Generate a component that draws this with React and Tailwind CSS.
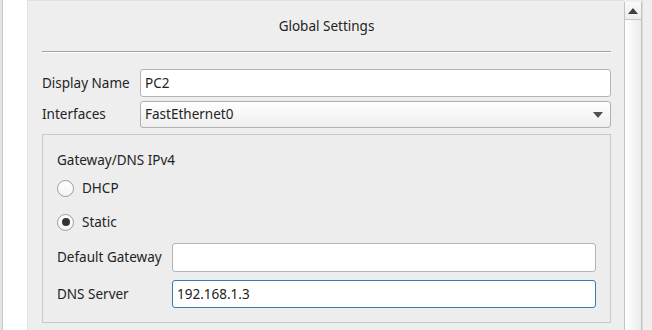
import React from "react";

const font = { fontFamily: '"Noto Sans", "Open Sans", sans-serif' };

const Radio = ({ checked, label }) => (
  <div className="flex items-center h-[20px]">
    <span className="w-[17px] h-[17px] rounded-full border border-[#9c9c9c] bg-gradient-to-b from-white to-[#f4f4f4] flex items-center justify-center">
      {checked && <span className="w-[8px] h-[8px] rounded-full bg-[#333333]" />}
    </span>
    <span className="ml-[8px]">{label}</span>
  </div>
);

const App = () => {
  return (
    <div
      className="flex w-[652px] h-[330px] bg-white text-[13.5px] text-[#232323] overflow-hidden"
      style={font}
    >
      {/* left edge */}
      <div className="w-[3px] bg-[#e4e4e4] border-r border-[#c6c6c6]" />
      <div className="w-[24px] bg-white" />

      {/* main panel */}
      <div className="w-[597px] bg-[#eeeeee] border-l border-t border-[#e2e2e2] pl-[14px] pr-[13px] flex flex-col">
        <div className="h-[50px] flex items-center justify-center">
          Global Settings
        </div>
        <div className="h-[2px] border-t border-[#a4a4a4] border-b border-b-[#fafafa]" />

        <div className="mt-[16px] flex items-center h-[28px]">
          <span className="w-[98px] shrink-0">Display Name</span>
          <div className="flex-1 h-[28px] bg-white border border-[#b4b4b4] rounded-[3px] flex items-center px-[4px]">
            PC2
          </div>
        </div>

        <div className="mt-[4px] flex items-center h-[27px]">
          <span className="w-[98px] shrink-0">Interfaces</span>
          <div className="flex-1 h-[27px] bg-gradient-to-b from-white to-[#eeeeee] border border-[#b0b0b0] rounded-[3px] flex items-center justify-between pl-[4px] pr-[7px]">
            <span>FastEthernet0</span>
            <svg width="10" height="6" viewBox="0 0 10 6">
              <path d="M0 0 L10 0 L5 6 Z" fill="#505050" />
            </svg>
          </div>
        </div>

        {/* group box */}
        <div className="mt-[6px] h-[189px] border border-[#c9c9c9] bg-[#ededed] pl-[14px] pr-[14px] flex flex-col">
          <div className="mt-[15px] h-[20px] flex items-center">Gateway/DNS IPv4</div>
          <div className="mt-[8px]">
            <Radio label="DHCP" />
          </div>
          <div className="mt-[14px]">
            <Radio checked label="Static" />
          </div>

          <div className="mt-[11px] flex items-center h-[29px]">
            <span className="w-[115px] shrink-0">Default Gateway</span>
            <div className="flex-1 h-[29px] bg-white border border-[#b4b4b4] rounded-[3px]" />
          </div>

          <div className="mt-[8px] flex items-center h-[28px]">
            <span className="w-[115px] shrink-0">DNS Server</span>
            <div className="flex-1 h-[28px] bg-white border border-[#3a78b4] rounded-[3px] flex items-center px-[4px]">
              192.168.1.3
            </div>
          </div>
        </div>
      </div>

      {/* scrollbar */}
      <div className="w-[18px] bg-[#eeeeee] flex flex-col pt-[2px]">
        <div className="flex-1 flex flex-col border-l border-r border-[#c4c4c4] bg-gradient-to-r from-white to-[#ececec]">
          <div className="h-[18px] border-b border-[#c4c4c4] bg-gradient-to-b from-[#fafafa] to-[#ededed] flex items-center justify-center">
            <svg width="10" height="6" viewBox="0 0 10 6">
              <path d="M5 0 L10 6 L0 6 Z" fill="#404040" />
            </svg>
          </div>
        </div>
      </div>

      {/* right strip */}
      <div className="flex-1 bg-[#efefef] border-l border-[#dadada]" />
    </div>
  );
};

export default App;
